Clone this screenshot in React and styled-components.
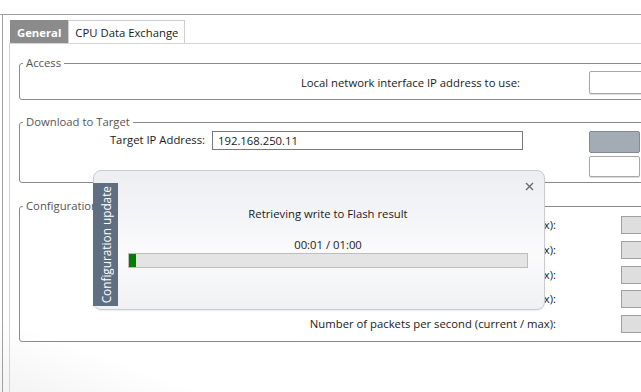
import React from "react";
import styled, { createGlobalStyle } from "styled-components";

const GlobalStyle = createGlobalStyle`
    html, body {
        margin: 0;
        padding: 0;
        background: #fff;
        overflow: hidden;
    }
    body {
        font-family: "Open Sans", "Noto Sans", sans-serif;
        font-size: 11.3px;
        color: #1a1a1a;
    }
`;

const configRows = [
    "Number of input connections (current / max):",
    "Number of output connections (current / max):",
    "Number of input bytes (current / max):",
    "Number of output bytes (current / max):",
    "Number of packets per second (current / max):",
];

const App = () => {
    return (
        <>
            <GlobalStyle />
            <StyledScreen>
                <StyledWindow>
                    <StyledFrame>
                        <StyledTabs>
                            <StyledTab active>General</StyledTab>
                            <StyledTab>CPU Data Exchange</StyledTab>
                        </StyledTabs>
                        <StyledPanel>
                            <StyledGroup>
                                <StyledLegend>Access</StyledLegend>
                                <StyledAccessGrid>
                                    <StyledLabel>Local network interface IP address to use:</StyledLabel>
                                    <StyledField />
                                </StyledAccessGrid>
                            </StyledGroup>
                            <StyledGroup top={14} bottom={5}>
                                <StyledLegend>Download to Target</StyledLegend>
                                <StyledTargetGrid>
                                    <StyledLabel>Target IP Address:</StyledLabel>
                                    <StyledTextInput>192.168.250.11</StyledTextInput>
                                    <StyledStack>
                                        <StyledButton />
                                        <StyledField height={21} />
                                    </StyledStack>
                                </StyledTargetGrid>
                            </StyledGroup>
                            <StyledGroup top={15} bottom={8}>
                                <StyledLegend>Configuration</StyledLegend>
                                <StyledConfigGrid>
                                    {configRows.map((row) => (
                                        <React.Fragment key={row}>
                                            <StyledLabel>{row}</StyledLabel>
                                            <StyledReadout />
                                        </React.Fragment>
                                    ))}
                                </StyledConfigGrid>
                            </StyledGroup>
                        </StyledPanel>
                    </StyledFrame>
                </StyledWindow>

                <StyledDialog>
                    <StyledSide>
                        <StyledSideText>Configuration update</StyledSideText>
                    </StyledSide>
                    <StyledDialogBody>
                        <StyledClose aria-label="close">
                            <svg width="9" height="9" viewBox="0 0 9 9">
                                <path d="M1 1 L8 8 M8 1 L1 8" stroke="#6a6a6a" strokeWidth="1.4" fill="none" />
                            </svg>
                        </StyledClose>
                        <StyledMessage>Retrieving write to Flash result</StyledMessage>
                        <StyledTime>00:01 / 01:00</StyledTime>
                        <StyledProgress>
                            <StyledProgressFill style={{ width: `${(1 / 60) * 100}%` }} />
                        </StyledProgress>
                    </StyledDialogBody>
                </StyledDialog>
            </StyledScreen>
        </>
    );
};

const StyledScreen = styled.div`
    position: relative;
    width: 641px;
    height: 392px;
    overflow: hidden;
    background: linear-gradient(20deg, #f3f3f3 0%, #ffffff 12%, #ffffff 100%);
`;
const StyledWindow = styled.div`
    margin-top: 14px;
    width: 760px;
    border-top: 1px solid #a0a0a0;
`;
const StyledFrame = styled.div`
    margin-left: 2px;
    height: 377px;
    border-left: 1px solid #a0a0a0;
    padding: 5px 0 0 6px;
`;
const StyledTabs = styled.div`
    display: flex;
    height: 23px;
    padding-left: 1px;
`;
const StyledTab = styled.div`
    display: flex;
    align-items: center;
    padding: 0 6px;
    height: 23px;
    box-sizing: border-box;
    font-weight: ${(p) => (p.active ? 700 : 400)};
    color: ${(p) => (p.active ? "#fff" : "#1a1a1a")};
    background: ${(p) => (p.active ? "#8b8b8b" : "#fff")};
    border: 1px solid ${(p) => (p.active ? "#8b8b8b" : "#cfcfcf")};
    border-bottom: none;
`;
const StyledPanel = styled.div`
    border-left: 1px solid #d4d4d4;
    border-top: 1px solid #d4d4d4;
    height: 340px;
    padding: 11px 0 0 9px;
`;
const StyledGroup = styled.fieldset`
    margin: ${(p) => p.top || 0}px 0 0 0;
    padding: 0 0 ${(p) => (p.bottom === undefined ? 5 : p.bottom)}px 0;
    border: 1px solid #8a8a8a;
    border-radius: 3px;
    min-width: 0;
`;
const StyledLegend = styled.legend`
    margin-left: 3px;
    padding: 0 3px 0 3px;
    color: #555;
    line-height: 16px;
`;
const StyledLabel = styled.div`
    text-align: right;
    white-space: nowrap;
    line-height: 16px;
    align-self: center;
`;
const StyledAccessGrid = styled.div`
    display: grid;
    grid-template-columns: 500px 110px;
    column-gap: 69px;
    align-items: center;
`;
const StyledField = styled.div`
    height: ${(p) => p.height || 23}px;
    box-sizing: border-box;
    background: #fff;
    border: 1px solid #a8a8a8;
    border-radius: 2px;
    box-shadow: 0 1px 1px rgba(0, 0, 0, 0.15);
`;
const StyledTargetGrid = styled.div`
    display: grid;
    grid-template-columns: 185px 311px 110px;
    column-gap: 7px;
    align-items: start;
    & > ${StyledLabel} {
        align-self: start;
        margin-top: 2px;
    }
`;
const StyledTextInput = styled.div`
    height: 19px;
    box-sizing: border-box;
    margin-top: 1px;
    border: 1px solid #7a7a7a;
    padding: 0 5px;
    line-height: 17px;
    background: #fff;
`;
const StyledStack = styled.div`
    display: flex;
    flex-direction: column;
    gap: 3px;
    margin-left: 59px;
    margin-top: 1px;
`;
const StyledButton = styled.div`
    height: 22px;
    box-sizing: border-box;
    background: #a3acb5;
    border: 1px solid #7f8b96;
    border-radius: 2px;
`;
const StyledConfigGrid = styled.div`
    display: grid;
    grid-template-columns: 536px 100px;
    column-gap: 65px;
    row-gap: 6.75px;
    padding-top: 2px;
`;
const StyledReadout = styled.div`
    height: 18px;
    box-sizing: border-box;
    background: #dedede;
    border: 1px solid #a0a0a0;
`;

const StyledDialog = styled.div`
    position: absolute;
    left: 93px;
    top: 170px;
    width: 452px;
    height: 140px;
    box-sizing: border-box;
    display: flex;
    border: 1px solid #c9cbce;
    border-radius: 8px;
    background: linear-gradient(180deg, #eceef1 0%, #f4f5f7 35%, #fbfbfc 60%, #f0f1f3 100%);
    box-shadow: 0 1px 2px rgba(0, 0, 0, 0.08);
`;
const StyledSide = styled.div`
    width: 25px;
    margin: 12px 0 3px -1px;
    background: #5f6e80;
    display: flex;
    align-items: center;
    justify-content: center;
`;
const StyledSideText = styled.span`
    writing-mode: vertical-rl;
    transform: rotate(180deg);
    color: #fff;
    font-size: 11.8px;
    white-space: nowrap;
`;
const StyledDialogBody = styled.div`
    position: relative;
    flex: 1;
    display: flex;
    flex-direction: column;
    align-items: center;
    padding: 35px 16px 0 10px;
`;
const StyledClose = styled.div`
    position: absolute;
    top: 11px;
    right: 10px;
    width: 9px;
    height: 9px;
    display: flex;
`;
const StyledMessage = styled.div`
    line-height: 16px;
`;
const StyledTime = styled.div`
    margin-top: 15px;
    line-height: 16px;
`;
const StyledProgress = styled.div`
    align-self: stretch;
    height: 15px;
    box-sizing: border-box;
    background: #e4e4e4;
    border: 1px solid #bdbdbd;
    position: relative;
`;
const StyledProgressFill = styled.div`
    height: 100%;
    min-width: 7px;
    background: #008000;
`;

export default App;
